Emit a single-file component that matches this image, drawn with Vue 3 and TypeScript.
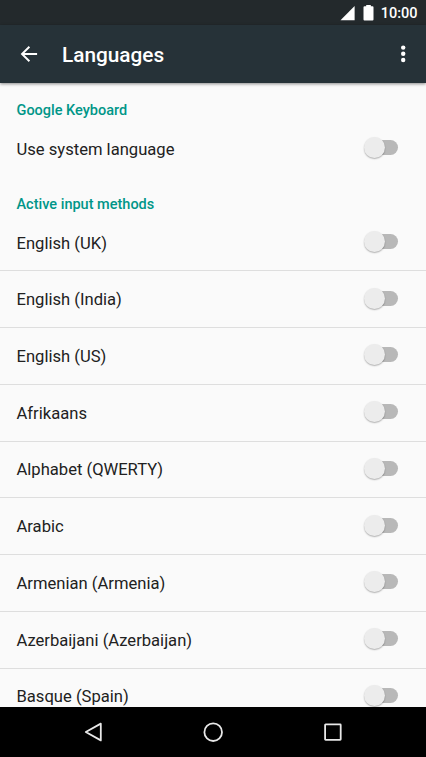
<script setup lang="ts">
import { ref } from 'vue'

interface Setting {
  label: string
  on: boolean
}

interface Section {
  title: string
  items: Setting[]
}

const makeItems = (labels: string[]): Setting[] => labels.map((label) => ({ label, on: false }))

const sections = ref<Section[]>([
  { title: 'Google Keyboard', items: makeItems(['Use system language']) },
  {
    title: 'Active input methods',
    items: makeItems([
      'English (UK)',
      'English (India)',
      'English (US)',
      'Afrikaans',
      'Alphabet (QWERTY)',
      'Arabic',
      'Armenian (Armenia)',
      'Azerbaijani (Azerbaijan)',
      'Basque (Spain)',
    ]),
  },
])
</script>

<template>
  <div class="screen">
    <div class="status">
      <svg class="signal" width="15" height="15" viewBox="0 0 15 15"><path d="M.5 14.2 14.6.1v14.1z" fill="#fff" /></svg>
      <svg class="battery" width="11" height="16" viewBox="0 0 11 16"><path d="M3.2 0h4.6v1.2h1.7q1 0 1 1v12.3q0 1-1 1h-8q-1 0-1-1V2.2q0-1 1-1h1.7z" fill="#fff" /></svg>
      <span class="clock">10:00</span>
    </div>

    <header class="toolbar">
      <svg class="back" width="18" height="18" viewBox="0 0 18 18">
        <path d="M17.1 9H2.2M9.4 1.7 2 9l7.4 7.3" fill="none" stroke="#fff" stroke-width="1.9" />
      </svg>
      <h1 class="title">Languages</h1>
      <svg class="more" width="6" height="18" viewBox="0 0 6 18" fill="#fff">
        <circle cx="3.2" cy="2.6" r="2.2" />
        <circle cx="3.2" cy="8.8" r="2.2" />
        <circle cx="3.2" cy="15" r="2.2" />
      </svg>
    </header>

    <main class="list">
      <section v-for="section in sections" :key="section.title">
        <h2 class="category">{{ section.title }}</h2>
        <div v-for="item in section.items" :key="item.label" class="row" @click="item.on = !item.on">
          <span class="label">{{ item.label }}</span>
          <span class="switch" :class="{ on: item.on }"><span class="thumb"></span></span>
        </div>
      </section>
    </main>

    <nav class="navbar">
      <svg width="20" height="20" viewBox="0 0 20 20"><path d="M17.8 1.6v16.8L2.8 10z" /></svg>
      <svg width="20" height="20" viewBox="0 0 20 20"><circle cx="10.2" cy="10.2" r="8.8" /></svg>
      <svg width="20" height="20" viewBox="0 0 20 20"><rect x="2.1" y="2.4" width="15.6" height="15.4" rx=".5" /></svg>
    </nav>
  </div>
</template>

<style>
body {
  margin: 0;
}
</style>

<style scoped>
.screen {
  display: flex;
  flex-direction: column;
  width: 426px;
  height: 757px;
  overflow: hidden;
  background: #fafafa;
  color: #212121;
  font-family: Roboto, "Liberation Sans", sans-serif;
}
.status {
  flex: none;
  display: flex;
  align-items: center;
  height: 25px;
  padding-right: 8.5px;
  box-sizing: border-box;
  justify-content: flex-end;
  background: #23292c;
  color: #fff;
}
.signal {
  margin-top: 1px;
}
.battery {
  margin: 0 7px 0 8px;
}
.clock {
  font-size: 14.5px;
  font-weight: 500;
  line-height: 25px;
  padding-top: 1px;
}
.toolbar {
  flex: none;
  display: flex;
  align-items: center;
  height: 57.5px;
  padding: 0 20px;
  box-sizing: border-box;
  background: #263238;
  box-shadow: 0 1px 3px rgba(0, 0, 0, 0.45);
  z-index: 1;
}
.title {
  flex: 1;
  margin: 0 0 0 24px;
  padding-top: 2px;
  color: #fff;
  font-size: 20.8px;
  font-weight: 500;
  line-height: 28px;
}
.list {
  flex: 1;
  min-height: 0;
  overflow: hidden;
}
.category {
  height: 37.2px;
  margin: 0;
  padding: 18.3px 16.5px 0;
  box-sizing: border-box;
  color: #009688;
  font-size: 14.5px;
  font-weight: 500;
  line-height: 19px;
}
.row {
  display: flex;
  align-items: center;
  justify-content: space-between;
  height: 56.75px;
  padding: 0 28px 0 16.5px;
  box-sizing: border-box;
}
.row + .row {
  padding-bottom: 1.2px;
  border-top: 1px solid #dedede;
}
.label {
  font-size: 16.6px;
  line-height: 22px;
  padding-top: 3px;
}
.switch {
  position: relative;
  width: 33px;
  height: 15px;
  margin-bottom: 1px;
  border-radius: 8px;
  background: #b8b8b8;
}
.thumb {
  position: absolute;
  top: -3px;
  left: -1px;
  width: 21px;
  height: 21px;
  border-radius: 50%;
  background: #ececec;
  box-shadow: 0 1px 1.5px rgba(0, 0, 0, 0.3);
}
.switch.on {
  background: #80cbc4;
}
.switch.on .thumb {
  left: 13px;
  background: #009688;
}
.navbar {
  flex: none;
  display: flex;
  align-items: center;
  justify-content: center;
  gap: 100px;
  height: 50px;
  background: #000;
}
.navbar svg {
  fill: none;
  stroke: #e8e8e8;
  stroke-width: 1.8;
  stroke-linejoin: round;
}
</style>
